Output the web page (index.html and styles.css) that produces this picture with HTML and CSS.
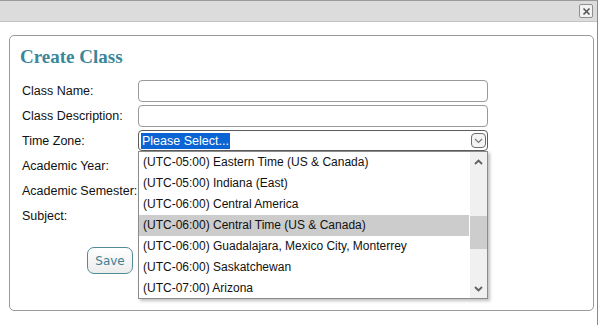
FILE: index.html
```html
<!DOCTYPE html>
<html lang="en">
<head>
  <meta charset="UTF-8" />
  <title>Create Class</title>
  <link rel="stylesheet" href="styles.css">
</head>
<body>
  <div class="dialog">
    <div class="titlebar">
      <button class="close-btn" title="Close">
        <svg width="9" height="9" viewBox="0 0 9 9"><path d="M1.5 1.5 L7.5 7.5 M7.5 1.5 L1.5 7.5" stroke="#555" stroke-width="1.6"/></svg>
      </button>
    </div>
    <div class="content">
      <div class="panel">
        <h2>Create Class</h2>
        <div class="form">
          <label>Class Name:</label>
          <input type="text" class="field">
          <label>Class Description:</label>
          <input type="text" class="field">
          <label>Time Zone:</label>
          <div class="select-wrap">
            <div class="select">
              <span class="selected">Please Select...</span>
              <span class="arrow">
                <svg width="9" height="6" viewBox="0 0 9 6"><path d="M1 1 L4.5 4.5 L8 1" stroke="#777" stroke-width="1.2" fill="none"/></svg>
              </span>
            </div>
            <div class="dropdown">
              <ul class="options">
                <li>(UTC-05:00) Eastern Time (US &amp; Canada)</li>
                <li>(UTC-05:00) Indiana (East)</li>
                <li>(UTC-06:00) Central America</li>
                <li class="hover">(UTC-06:00) Central Time (US &amp; Canada)</li>
                <li>(UTC-06:00) Guadalajara, Mexico City, Monterrey</li>
                <li>(UTC-06:00) Saskatchewan</li>
                <li>(UTC-07:00) Arizona</li>
              </ul>
              <div class="scrollbar">
                <svg class="sb-up" width="9" height="6" viewBox="0 0 9 6"><path d="M1 5 L4.5 1.5 L8 5" stroke="#606060" stroke-width="1.8" fill="none"/></svg>
                <div class="thumb"></div>
                <svg class="sb-down" width="9" height="6" viewBox="0 0 9 6"><path d="M1 1 L4.5 4.5 L8 1" stroke="#606060" stroke-width="1.8" fill="none"/></svg>
              </div>
            </div>
          </div>
          <label>Academic Year:</label>
          <div></div>
          <label>Academic Semester:</label>
          <div></div>
          <label>Subject:</label>
          <div></div>
        </div>
        <div class="actions">
          <button class="save-btn">Save</button>
        </div>
      </div>
    </div>
  </div>
</body>
</html>
```

FILE: styles.css
```css
body {
  margin: 0;
  font-family: 'Liberation Sans', Arial, sans-serif;
  font-size: 12px;
  color: #111;
  background: #fff;
}

.dialog {
  width: 598px;
  height: 325px;
  border-right: 1px solid #8a8a8a;
  box-sizing: border-box;
  border-top: 1px solid #9a9a9a;
}

.titlebar {
  height: 20px;
  background: #dcdcdc;
  border-bottom: 1px solid #c4c4c4;
  display: flex;
  justify-content: flex-end;
  align-items: center;
  padding-right: 4px;
}

.close-btn {
  width: 14px;
  height: 14px;
  padding: 0;
  border: 1px solid #8f8f8f;
  border-radius: 2px;
  background: #f2f2f2;
  display: flex;
  align-items: center;
  justify-content: center;
}

.content {
  padding: 13px 3px 0 9px;
}

.panel {
  height: 276px;
  box-sizing: border-box;
  border: 1px solid #9a9a9a;
  border-radius: 5px;
  padding: 10px 12px 0 12px;
}

h2 {
  margin: 0 0 10px -2px;
  font-family: 'Liberation Serif', 'Times New Roman', serif;
  font-size: 19px;
  font-weight: bold;
  color: #3a879b;
}

.form {
  display: grid;
  grid-template-columns: 116px 350px;
  grid-auto-rows: 25px;
  align-items: center;
}

.form label {
  font-size: 12.5px;
}

.field {
  box-sizing: border-box;
  width: 350px;
  height: 22px;
  margin: 0;
  border: 1px solid #9a9a9a;
  border-radius: 4px;
  background: #fff;
}

.select-wrap {
  position: relative;
}

.select {
  box-sizing: border-box;
  height: 21px;
  border: 1px solid #5c5c5c;
  border-radius: 4px;
  display: flex;
  align-items: center;
  justify-content: space-between;
  padding: 0 1px 0 2px;
  background: #fff;
}

.selected {
  background: #0a64d4;
  color: #fff;
  font-size: 12.5px;
  padding: 1px 1px;
  line-height: 14px;
}

.arrow {
  width: 15px;
  height: 15px;
  box-sizing: border-box;
  border: 1px solid #6e6e6e;
  border-radius: 4px;
  background: #f4f4f4;
  display: flex;
  align-items: center;
  justify-content: center;
}

.dropdown {
  position: absolute;
  top: 21px;
  left: 0;
  width: 350px;
  height: 148px;
  box-sizing: border-box;
  background: #fff;
  border: 1px solid #8c8c8c;
  box-shadow: 2px 2px 3px rgba(0, 0, 0, 0.25);
  display: flex;
  z-index: 2;
}

.options {
  list-style: none;
  margin: 0;
  padding: 0;
  flex: 1;
}

.options li {
  height: 21px;
  line-height: 21px;
  padding-left: 4px;
  font-size: 12px;
  color: #111;
  white-space: nowrap;
}

.options li.hover {
  background: #cccccc;
  margin-right: 1px;
}

.scrollbar {
  width: 17px;
  background: #f0f0f0;
  position: relative;
}

.sb-up {
  position: absolute;
  top: 7px;
  left: 4px;
}

.sb-down {
  position: absolute;
  bottom: 6px;
  left: 4px;
}

.thumb {
  position: absolute;
  top: 64px;
  left: 0;
  width: 17px;
  height: 33px;
  background: #cdcdcd;
}

.actions {
  padding: 19px 0 0 65px;
}

.save-btn {
  width: 46px;
  height: 27px;
  border: 1px solid #4f8c98;
  border-radius: 7px;
  background: linear-gradient(#ffffff, #ececec);
  color: #3f8094;
  font-family: 'DejaVu Sans', Tahoma, sans-serif;
  font-size: 12px;
  padding: 0;
}
```
